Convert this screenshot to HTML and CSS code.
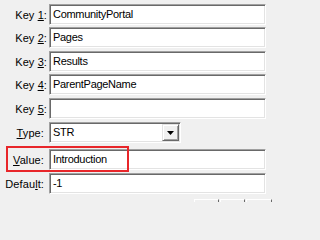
FILE: index.html
```html
<!DOCTYPE html>
<html>
<head>
<meta charset="utf-8">
<link rel="stylesheet" href="styles.css">
</head>
<body>
<div class="form">
  <div class="row r1"><label class="lbl">Key <u>1</u>:</label><div class="field">CommunityPortal</div></div>
  <div class="row r2"><label class="lbl">Key <u>2</u>:</label><div class="field">Pages</div></div>
  <div class="row r3"><label class="lbl">Key <u>3</u>:</label><div class="field">Results</div></div>
  <div class="row r4"><label class="lbl">Key <u>4</u>:</label><div class="field">ParentPageName</div></div>
  <div class="row r5"><label class="lbl">Key <u>5</u>:</label><div class="field"></div></div>
  <div class="row r6"><label class="lbl short"><u>T</u>ype:</label>
    <div class="field combo"><span class="combo-text">STR</span><span class="combo-btn"><svg width="7" height="4" viewBox="0 0 7 4"><path d="M0 0H7L3.5 4Z" fill="#000"/></svg></span></div>
  </div>
  <div class="row r7"><label class="lbl short"><u>V</u>alue:</label><div class="field">Introduction</div></div>
  <div class="row r8"><label class="lbl short">Defau<u>l</u>t:</label><div class="field">-1</div></div>
  <div class="buttons"><span class="btn"></span><span class="btn"></span><span class="btn"></span></div>
</div>
<div class="highlight"></div>
</body>
</html>
```

FILE: styles.css
```css
html, body {
  margin: 0;
  padding: 0;
  background: #f0f0f0;
}
body {
  position: relative;
  width: 272px;
  height: 202px;
  overflow: hidden;
  font-family: "Liberation Sans", Arial, sans-serif;
  font-size: 11px;
  letter-spacing: -0.3px;
  color: #000;
}
.form {
  padding-top: 4px;
  display: flex;
  flex-direction: column;
}
.row {
  display: flex;
  align-items: center;
  height: 21px;
}
.r1, .r3 { margin-bottom: 2px; }
.r2, .r4 { margin-bottom: 3px; }
.r5 { margin-bottom: 3px; }
.r6 { margin-bottom: 6px; }
.r7 { margin-bottom: 3px; }
.lbl {
  width: 47px;
  box-sizing: border-box;
  text-align: right;
  margin-right: 2px;
  letter-spacing: 0.1px;
  color: #000;
}
.lbl u { text-decoration: underline; }
.lbl.short { padding-right: 3px; }
.field {
  box-sizing: border-box;
  width: 217px;
  height: 21px;
  background: #fff;
  border: 1px solid;
  border-color: #a0a0a0 #ffffff #ffffff #a0a0a0;
  box-shadow: inset 1px 1px 0 #696969, inset -1px -1px 0 #e3e3e3;
  padding: 0 0 0 3px;
  line-height: 19px;
  white-space: nowrap;
  overflow: hidden;
}
.combo {
  width: 132px;
  display: flex;
  align-items: center;
  justify-content: space-between;
  padding: 0 1px 0 3px;
}
.combo-btn {
  box-sizing: border-box;
  width: 17px;
  height: 17px;
  background: #f0f0f0;
  border: 1px solid;
  border-color: #e3e3e3 #696969 #696969 #e3e3e3;
  box-shadow: inset 1px 1px 0 #ffffff, inset -1px -1px 0 #a0a0a0;
  display: flex;
  align-items: center;
  justify-content: center;
}
.buttons {
  display: flex;
  justify-content: flex-end;
  gap: 1px;
  margin-top: 5px;
  padding-left: 194px;
}
.btn {
  box-sizing: border-box;
  width: 25px;
  height: 23px;
  flex: none;
  background: #f0f0f0;
  border: 1px solid;
  border-color: #ffffff #696969 #696969 #ffffff;
}
.btn:last-child { width: 26px; }
.highlight {
  position: absolute;
  left: 6px;
  top: 146px;
  width: 123px;
  height: 26px;
  box-sizing: border-box;
  border: 2px solid #e8262a;
}
```
